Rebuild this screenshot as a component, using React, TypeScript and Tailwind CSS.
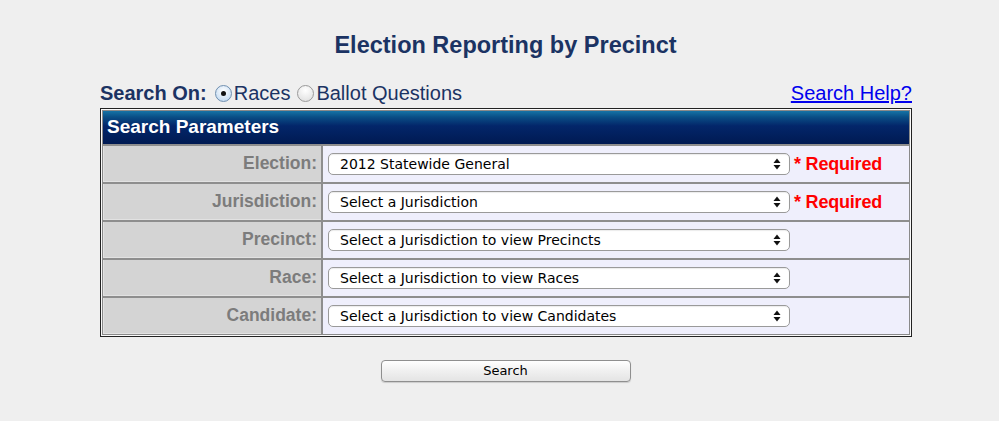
import React from "react";

const Arrows = () => (
  <svg width="8" height="12" viewBox="0 0 8 12" className="absolute right-[8px] top-1/2 -translate-y-1/2">
    <path d="M4 0.5 L7.5 5 L0.5 5 Z" fill="#111" />
    <path d="M4 11.5 L7.5 7 L0.5 7 Z" fill="#111" />
  </svg>
);

const Select = ({ text }: { text: string }) => (
  <div className="relative w-[462px] h-[22px] rounded-[5px] border border-[#9a9a9a] bg-white shadow-[inset_0_1px_1px_rgba(0,0,0,0.08)] flex items-center pl-[11px] text-[14px] text-black" style={{ fontFamily: '"DejaVu Sans", sans-serif' }}>
    <span className="leading-none">{text}</span>
    <Arrows />
  </div>
);

const Row = ({ label, value, required }: { label: string; value: string; required?: boolean }) => (
  <div className="flex gap-[2px] h-[36px]">
    <div className="w-[218px] bg-[#d4d4d4] border-l border-b border-[#e2e2e2] flex items-center justify-end pr-[4px] text-[17.5px] font-bold text-[#7c7c7c]">
      {label}
    </div>
    <div className="flex-1 bg-[#efeffc] flex items-center pl-[5px]">
      <Select text={value} />
      {required && (
        <span className="ml-[4px] text-[18px] font-bold text-[#ff0000] leading-none tracking-[-0.2px]">* Required</span>
      )}
    </div>
  </div>
);

export default function App() {
  return (
    <div className="w-[999px] h-[421px] bg-[#efefef] overflow-hidden" style={{ fontFamily: '"Liberation Sans", Arial, sans-serif' }}>
      <div className="pt-[31px] pl-[12px] text-center text-[23.5px] leading-[28px] font-bold text-[#1b3363]">
        Election Reporting by Precinct
      </div>
      <div className="ml-[100px] w-[812px] mt-[22px]">
        <div className="flex items-center h-[24px] text-[20px] leading-[24px] text-[#1b3363]">
          <span className="font-bold">Search On:</span>
          <span className="ml-[8px] w-[17px] h-[17px] rounded-full border border-[#6f8fb0] bg-[radial-gradient(circle_at_50%_35%,#ffffff,#b7d3ef)] flex items-center justify-center">
            <span className="w-[5px] h-[5px] rounded-full bg-[#111]" />
          </span>
          <span className="ml-[2px]">Races</span>
          <span className="ml-[7px] w-[17px] h-[17px] rounded-full border border-[#9a9a9a] bg-[radial-gradient(circle_at_50%_30%,#ffffff,#dcdcdc)]" />
          <span className="ml-[2px]">Ballot Questions</span>
          <a href="#" className="ml-auto text-[#0000ee] underline">Search Help?</a>
        </div>
        <div className="mt-[3px] border border-[#222] bg-[#fafafa] p-[1px]">
          <div className="border border-[#8a8a8a] bg-[#8e8e8e] flex flex-col gap-[2px]">
            <div className="h-[33px] bg-[linear-gradient(to_bottom,#1673a6_0%,#0a4f86_18%,#03266a_45%,#001a52_100%)] flex items-center pl-[4px] text-[19px] font-bold text-white">
              Search Parameters
            </div>
            <Row label="Election:" value="2012 Statewide General" required />
            <Row label="Jurisdiction:" value="Select a Jurisdiction" required />
            <Row label="Precinct:" value="Select a Jurisdiction to view Precincts" />
            <Row label="Race:" value="Select a Jurisdiction to view Races" />
            <Row label="Candidate:" value="Select a Jurisdiction to view Candidates" />
          </div>
        </div>
      </div>
      <div className="flex justify-center mt-[23px] pl-[12px]">
        <button className="w-[250px] h-[22px] rounded-[4px] border border-[#8f8f8f] bg-[linear-gradient(to_bottom,#ffffff,#f0f0f0_50%,#e4e4e4)] text-[13px] text-black shadow-[0_1px_1px_rgba(0,0,0,0.15)]" style={{ fontFamily: '"DejaVu Sans", sans-serif' }}>
          Search
        </button>
      </div>
    </div>
  );
}
